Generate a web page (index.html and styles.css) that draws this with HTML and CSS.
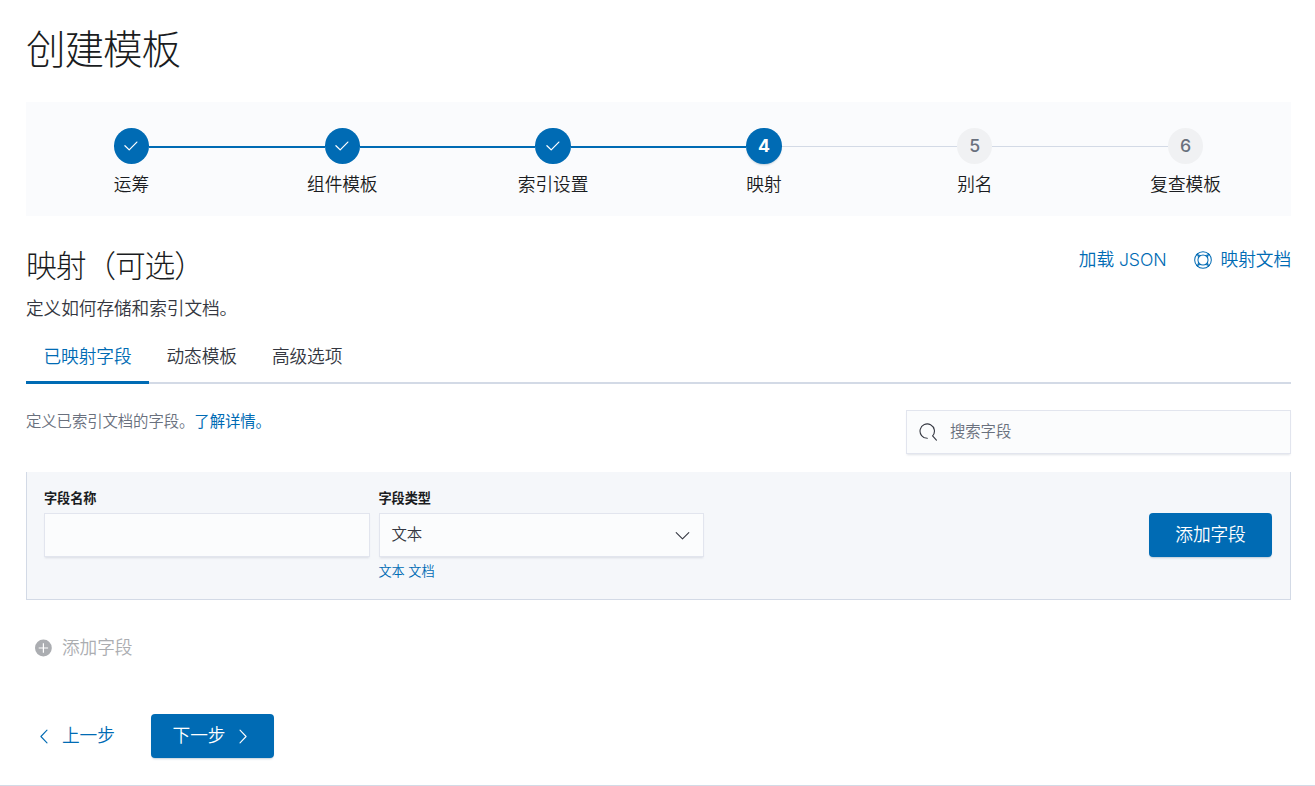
FILE: index.html
```html
<!DOCTYPE html>
<html lang="zh-CN">
<head>
<meta charset="utf-8">
<title>创建模板</title>
<link rel="stylesheet" href="styles.css">
</head>
<body>
<main class="page">
  <h1 class="title">创建模板</h1>
  <ol class="steps">
    <li class="step done"><span class="dot"><svg width="18" height="18" viewBox="0 0 16 16"><path class="line" d="M2.6 7.8 6.4 11.4 13.2 4.5"/></svg></span><span class="step-name">运筹</span></li>
    <li class="step done"><span class="dot"><svg width="18" height="18" viewBox="0 0 16 16"><path class="line" d="M2.6 7.8 6.4 11.4 13.2 4.5"/></svg></span><span class="step-name">组件模板</span></li>
    <li class="step done"><span class="dot"><svg width="18" height="18" viewBox="0 0 16 16"><path class="line" d="M2.6 7.8 6.4 11.4 13.2 4.5"/></svg></span><span class="step-name">索引设置</span></li>
    <li class="step current"><span class="dot">4</span><span class="step-name">映射</span></li>
    <li class="step"><span class="dot">5</span><span class="step-name">别名</span></li>
    <li class="step"><span class="dot">6</span><span class="step-name">复查模板</span></li>
  </ol>
  <header class="section-head">
    <div>
      <h2 class="subtitle">映射（可选）</h2>
      <p class="description">定义如何存储和索引文档。</p>
    </div>
    <nav class="links">
      <a class="link">加载 JSON</a>
      <a class="link doc-link"><svg width="18" height="18" viewBox="0 0 16 16"><g class="line thin"><circle cx="8" cy="8" r="7.4"/><circle cx="8" cy="8" r="4.5"/><path d="M3.3 2.3 4 5.9M2.3 3.3 5.9 4M12.7 2.3 12 5.9M13.7 3.3 10.1 4M3.3 13.7 4 10.1M2.3 12.7 5.9 12M12.7 13.7 12 10.1M13.7 12.7 10.1 12"/></g></svg>映射文档</a>
    </nav>
  </header>
  <nav class="tabs">
    <a class="tab selected">已映射字段</a>
    <a class="tab">动态模板</a>
    <a class="tab">高级选项</a>
  </nav>
  <div class="toolbar">
    <p class="hint">定义已索引文档的字段。<a class="learn">了解详情。</a></p>
    <div class="control search"><svg width="18" height="18" viewBox="0 0 18 18"><path class="line" d="M8.3 15.3A7.2 7.2 0 1 1 13.6 12.9L17.4 17.2"/></svg><span>搜索字段</span></div>
  </div>
  <section class="form">
    <div class="field">
      <label class="label">字段名称</label>
      <div class="control"></div>
    </div>
    <div class="field">
      <label class="label">字段类型</label>
      <div class="control select"><span>文本</span><svg width="18" height="18" viewBox="0 0 18 18"><path class="line" d="M3.2 6.7 9.5 12.9 15.8 6.7"/></svg></div>
      <a class="help">文本 文档</a>
    </div>
    <button class="button add">添加字段</button>
  </section>
  <div class="add-row"><svg width="18" height="18" viewBox="0 0 18 18"><circle class="disc" cx="9.4" cy="9" r="8.4"/><path class="plus" d="M9.4 4.3V13.7M4.7 9H14.1"/></svg>添加字段</div>
  <footer class="footer">
    <a class="link back"><svg width="18" height="18" viewBox="0 0 18 18"><path class="line" d="M12 3.2 5.9 9.5 12 15.8"/></svg>上一步</a>
    <button class="button next">下一步<svg width="18" height="18" viewBox="0 0 18 18"><path class="line" d="M6 3.2 12.1 9.5 6 15.8"/></svg></button>
  </footer>
</main>
</body>
</html>
```
FILE: styles.css
```css
* { box-sizing: border-box; }
body {
  margin: 0;
  background: #fff;
  color: #343741;
  font: 350 17.7px/26px Inter, "Noto Sans CJK SC", sans-serif;
  letter-spacing: -0.005em;
}
h1, h2, p, ol { margin: 0; padding: 0; }
svg { display: block; flex: none; }
.line { fill: none; stroke: currentColor; stroke-width: 1.1; stroke-linecap: round; stroke-linejoin: round; }
.thin { stroke-width: .9; }
.page {
  height: 786px;
  padding: 23px 24px 0 26px;
  border-bottom: 1px solid #d3dae6;
  overflow: hidden;
}
.title {
  height: 79px;
  color: #1a1c21;
  font-size: 39.6px;
  font-weight: 300;
  line-height: 54px;
  letter-spacing: -0.028em;
}
.steps {
  display: grid;
  grid-template-columns: repeat(6, 1fr);
  height: 114px;
  padding-top: 26px;
  background: #fafbfd;
  list-style: none;
}
.step {
  display: grid;
  grid-template-columns: 1fr 35.2px 1fr;
  grid-template-rows: 35.5px 42px;
  align-items: center;
  color: #1a1c21;
}
.step::before, .step::after {
  content: "";
  grid-row: 1;
  height: 1px;
  background: #d3dae6;
  margin-top: 1px;
}
.step::before { grid-column: 1; }
.step::after { grid-column: 3; }
.done::before, .done::after, .current::before { height: 2px; margin-top: 2px; background: #006bb4; }
.step:first-child::before, .step:last-child::after { visibility: hidden; }
.dot {
  grid-area: 1 / 2;
  display: grid;
  place-items: center;
  height: 35.5px;
  border-radius: 50%;
  background: #f0f1f3;
  color: #69707d;
  font-weight: 500;
}
.done .dot, .current .dot { background: #006bb4; color: #fff; }
.current .dot { font-weight: 700; box-shadow: 0 2px 2px -1px rgba(54, 97, 126, .3); }
.step-name { grid-area: 2 / 1 / 3 / 4; text-align: center; }
.section-head { display: flex; justify-content: space-between; height: 115px; padding-top: 31px; }
.subtitle {
  color: #1a1c21;
  font-size: 30.8px;
  font-weight: 300;
  line-height: 38px;
  letter-spacing: -0.038em;
}
.description { margin-top: 11px; }
.links { display: flex; gap: 27px; height: 26px; }
.link { color: #006bb4; }
.doc-link { display: flex; align-items: center; gap: 9px; }
.tabs { display: flex; height: 53px; border-bottom: 2px solid #d3dae6; }
.tab { height: 53px; padding: 13px 17.5px 0; }
.selected { width: 123px; border-bottom: 3px solid #006bb4; color: #006bb4; }
.toolbar { display: flex; justify-content: space-between; height: 88px; padding-top: 26px; }
.hint { color: #69707d; font-size: 15.4px; line-height: 24px; }
.learn { color: #006bb4; font-weight: 400; }
.control {
  display: flex;
  align-items: center;
  height: 44px;
  padding: 0 12px;
  border: 1px solid #e2e5ee;
  background: #fbfcfd;
  box-shadow: 0 2px 2px -1px rgba(152, 162, 179, .3);
  font-size: 15.4px;
}
.search { width: 385px; gap: 13px; color: #343741; }
.search span { color: #69707d; }
.form {
  display: flex;
  gap: 9px;
  height: 128px;
  padding: 16px 18px 0 17px;
  border: solid #d3dae6;
  border-width: 0 1px 1px;
  background: #f5f7fa;
}
.field { width: 325.5px; }
.label { display: block; height: 25px; color: #1a1c21; font-size: 13.2px; font-weight: 600; line-height: 20px; }
.select { justify-content: space-between; }
.help { display: block; margin-top: 4px; color: #006bb4; font-size: 13.2px; line-height: 20px; }
.button {
  display: flex;
  align-items: center;
  justify-content: center;
  width: 123px;
  height: 44px;
  padding: 0;
  border: 0;
  border-radius: 4px;
  background: #006bb4;
  color: #fff;
  font: inherit;
  letter-spacing: inherit;
  box-shadow: 0 2px 2px -1px rgba(54, 97, 126, .3);
}
.add { margin: 25px 0 0 auto; }
.add-row { display: flex; align-items: center; gap: 10px; height: 96px; padding-left: 8px; color: #abadb1; }
.disc { fill: #abadb1; }
.plus { stroke: #fff; stroke-width: 1.2; }
.footer { display: flex; align-items: center; gap: 37px; height: 44px; margin-top: 18px; }
.back { display: flex; align-items: center; gap: 9px; width: 88px; padding-left: 9px; white-space: nowrap; }
.next { gap: 9px; }
```
